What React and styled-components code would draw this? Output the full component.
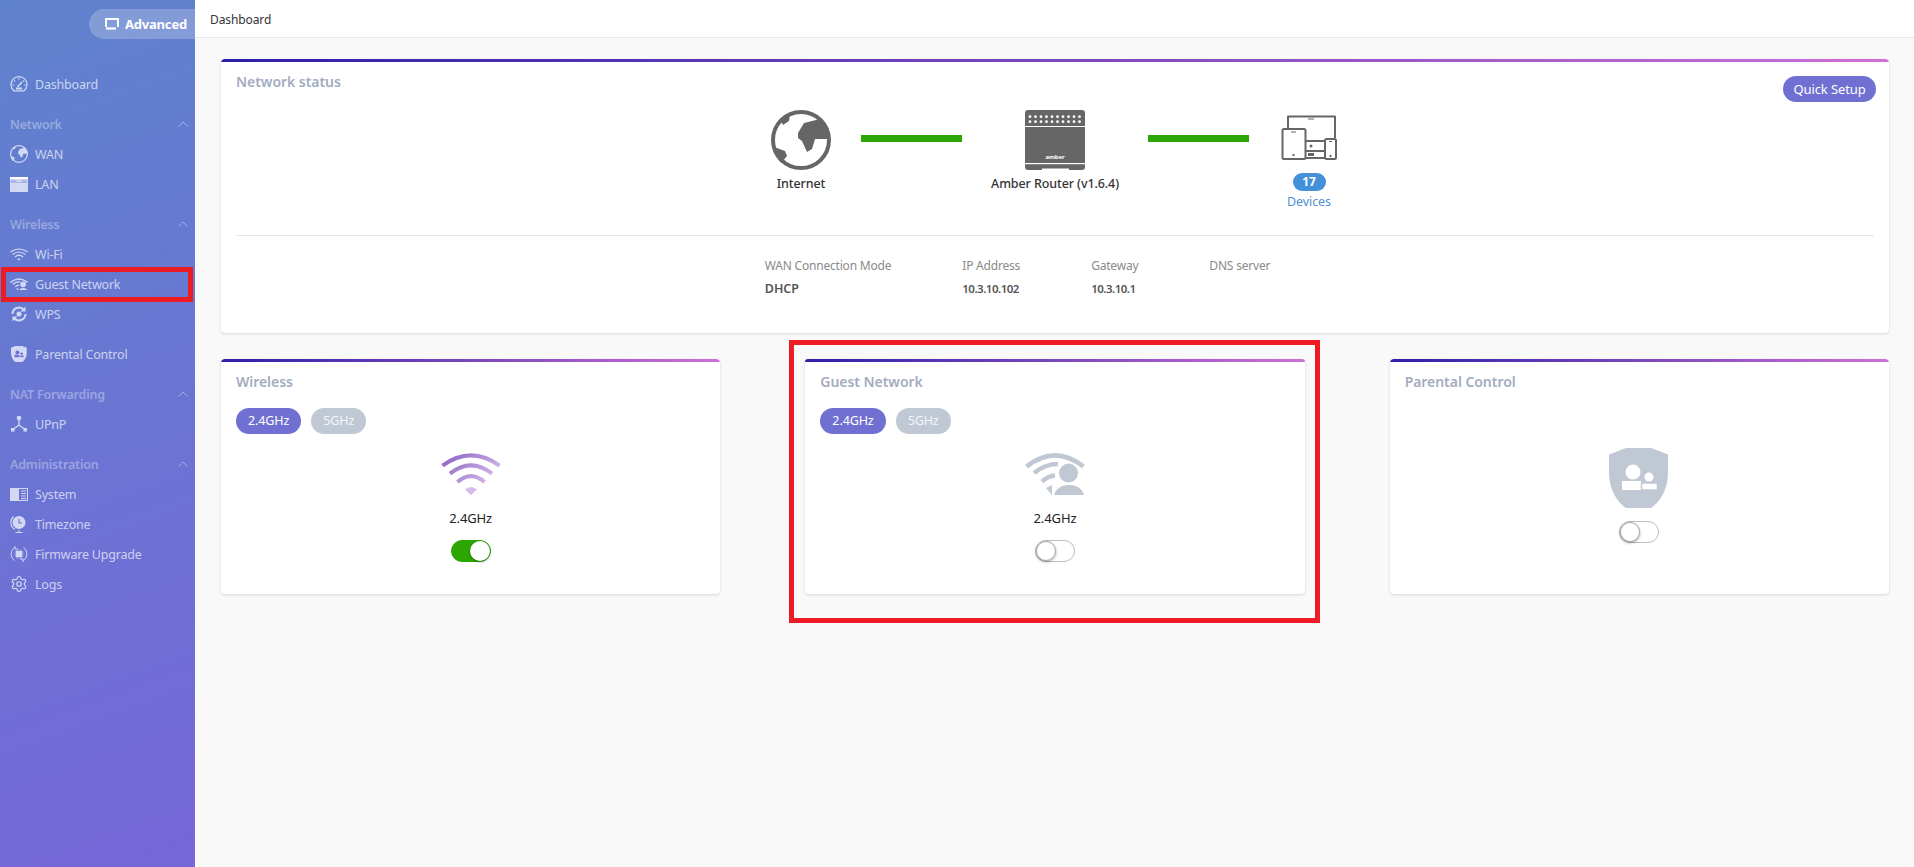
import styled, { createGlobalStyle } from 'styled-components';
import { Settings } from 'lucide-react';

const GlobalStyle = createGlobalStyle`
  html, body {
    margin: 0;
    padding: 0;
    height: 100%;
    overflow: hidden;
    background: #f9f9f9;
    font-family: "Noto Sans", "Open Sans", Arial, sans-serif;
  }
  #root { height: 100%; }
`;

const Page = styled.div`
  display: flex;
  width: 1914px;
  height: 867px;
`;

/* ---------- sidebar ---------- */
const Sidebar = styled.aside`
  width: 195px;
  flex: none;
  box-sizing: border-box;
  padding-top: 9px;
  background: linear-gradient(160deg, #5f82cd 0%, #6a75d3 50%, #7766d8 100%);
`;
const ModePill = styled.div`
  display: flex;
  align-items: center;
  gap: 6px;
  margin-left: 89px;
  height: 30px;
  padding-left: 16px;
  border-radius: 15px 0 0 15px;
  background: rgba(255, 255, 255, 0.22);
  color: #fff;
  font-size: 13px;
  font-weight: 700;
  letter-spacing: -0.2px;
`;
const Nav = styled.nav`
  margin-top: 30px;
`;
const NavGroup = styled.div`
  margin-bottom: 10px;
`;
const GroupHead = styled.div`
  display: flex;
  align-items: center;
  justify-content: space-between;
  height: 30px;
  padding: 0 7px 0 10px;
  color: rgba(255, 255, 255, 0.35);
  font-size: 12.5px;
  font-weight: 600;
  letter-spacing: -0.2px;
`;
const NavItem = styled.div`
  position: relative;
  display: flex;
  align-items: center;
  height: 30px;
  padding-left: 10px;
  color: rgba(255, 255, 255, 0.68);
  font-size: 12.5px;
  letter-spacing: -0.2px;

  ${(p) => p.$marked && `
    &::after {
      content: '';
      position: absolute;
      top: -2px;
      bottom: -3px;
      left: 1px;
      right: 2px;
      border: 5px solid #ed1c24;
    }
  `}
`;
const NavIcon = styled.span`
  display: flex;
  align-items: center;
  justify-content: center;
  width: 18px;
  height: 18px;
  margin-right: 7px;
  color: #d3d9f5;
`;

/* ---------- main ---------- */
const Main = styled.main`
  flex: 1;
  min-width: 0;
`;
const TopBar = styled.header`
  height: 38px;
  box-sizing: border-box;
  padding-left: 15px;
  background: #fff;
  border-bottom: 1px solid #e8e8e8;
  color: #333;
  font-size: 12px;
  line-height: 39px;
  letter-spacing: -0.1px;
`;
const Content = styled.div`
  padding: 21px 25px 0 26px;
`;
const Card = styled.section`
  position: relative;
  border-radius: 4px;
  background: #fff;
  box-shadow: 0 1px 3px rgba(0, 0, 0, 0.14);
  overflow: ${(p) => (p.$marked ? 'visible' : 'hidden')};

  &::before {
    content: '';
    display: block;
    height: 3px;
    border-radius: 4px 4px 0 0;
    background: linear-gradient(90deg, #2e1fa8 0%, #8a4fc0 60%, #cf6fd8 100%);
  }
  ${(p) => p.$marked && `
    &::after {
      content: '';
      position: absolute;
      top: -19px;
      bottom: -29px;
      left: -16px;
      right: -15px;
      border: 5px solid #ed1c24;
    }
  `}
`;
const CardTitle = styled.h2`
  margin: 0;
  padding: 7px 15px 0;
  height: 24px;
  color: #a3acc0;
  font-size: 14px;
  font-weight: 600;
  line-height: 26px;
  letter-spacing: -0.05px;
`;
const StatusCard = styled(Card)`
  height: 274px;
`;
const QuickSetup = styled.button`
  position: absolute;
  top: 17px;
  right: 13px;
  width: 93px;
  height: 26px;
  padding: 0;
  border: 0;
  border-radius: 13px;
  background: #7070d2;
  color: #fff;
  font: 400 13px "Noto Sans", sans-serif;
  letter-spacing: -0.1px;
`;
const Topology = styled.div`
  display: flex;
  justify-content: center;
  height: 126px;
  margin: 16px 15px 0;
  border-bottom: 1px solid #e6e6e6;
`;
const TopoNode = styled.div`
  display: flex;
  flex-direction: column;
  align-items: center;
  width: ${(p) => p.$w}px;
  color: #333;
  font-size: 12.5px;
  font-weight: 500;
  letter-spacing: -0.1px;
`;
const TopoIcon = styled.div`
  display: flex;
  align-items: flex-end;
  height: ${(p) => (p.$lift ? 51 : 61)}px;
  margin-bottom: ${(p) => (p.$lift ? 14 : 5)}px;
`;
const Link = styled.div`
  width: 101px;
  height: 7px;
  margin: 26px ${(p) => p.$right}px 0 ${(p) => p.$left}px;
  background: #2ca600;
`;
const CountBadge = styled.span`
  width: 33px;
  height: 18px;
  margin-top: -1px;
  border-radius: 9px;
  background: #4490d9;
  color: #fff;
  font-size: 12px;
  font-weight: 700;
  line-height: 18px;
  text-align: center;
`;
const DevicesLabel = styled.span`
  margin-top: 2px;
  color: #4f8fd6;
  font-size: 12.5px;
  font-weight: 400;
`;
const InfoRow = styled.div`
  display: flex;
  justify-content: center;
  padding: 21px 4px 0 0;
`;
const InfoCol = styled.div`
  padding-right: 71px;
`;
const InfoLabel = styled.div`
  height: 23px;
  color: #8a8a8a;
  font-size: 12px;
  line-height: 18px;
  letter-spacing: -0.2px;
`;
const InfoValue = styled.div`
  color: #555;
  font-size: ${(p) => (p.$numeric ? 11.5 : 12.5)}px;
  font-weight: 600;
  line-height: 18px;
  letter-spacing: ${(p) => (p.$numeric ? -0.5 : 0)}px;
`;
const CardRow = styled.div`
  display: grid;
  grid-template-columns: repeat(3, 1fr);
  gap: 85px;
  margin-top: 26px;
`;
const FeatureCard = styled(Card)`
  height: 235px;
`;
const BandTabs = styled.div`
  display: flex;
  gap: 10px;
  height: 26px;
  margin: 15px 15px 0;
`;
const BandTab = styled.span`
  padding: 0 12px;
  border-radius: 13px;
  background: ${(p) => (p.$active ? '#7070d2' : '#c0c8d4')};
  color: ${(p) => (p.$active ? '#fff' : '#f4f5f8')};
  font-size: 12.5px;
  letter-spacing: -0.1px;
  line-height: 26px;
`;
const FeatureBody = styled.div`
  display: flex;
  flex-direction: column;
  align-items: center;
  margin-top: ${(p) => p.$top}px;
`;
const BandLabel = styled.div`
  margin-top: 13px;
  color: #222;
  font-size: 13px;
  line-height: 20px;
  letter-spacing: -0.1px;
`;
const Toggle = styled.span`
  position: relative;
  display: block;
  box-sizing: border-box;
  width: 40px;
  height: 22px;
  margin-top: ${(p) => p.$top}px;
  border-radius: 11px;
  border: 1px solid ${(p) => (p.$on ? '#2ca600' : '#bdbdbd')};
  background: ${(p) => (p.$on ? '#2ca600' : '#fff')};

  &::after {
    content: '';
    position: absolute;
    top: 0;
    ${(p) => (p.$on ? 'right: 0;' : 'left: 0;')}
    box-sizing: border-box;
    width: 20px;
    height: 20px;
    border-radius: 50%;
    background: #fff;
    ${(p) => !p.$on && 'border: 1px solid #aaa;'}
    box-shadow: 0 1px 3px rgba(0, 0, 0, 0.35);
  }
`;

/* ---------- drawings ---------- */
const GlobeIcon = ({ size = 60, color = '#666' }) => (
  <svg width={size} height={size} viewBox="0 0 60 60" fill={color}>
    <circle cx="30" cy="30" r="28" fill="none" stroke={color} strokeWidth="4" />
    <path d="M27 23 33 13 49 9 57 20 58 29 44 29 41 39 36 42 31 31 27 28Z" />
    <path d="M9 9 19 4 18 11 12 15Z" />
    <path d="M3 37 14 41 16 46 10 53 5 46Z" />
  </svg>
);

const RouterIcon = () => {
  const dots = Array.from({ length: 10 }, (_, i) => 5 + i * 5.5);
  return (
    <svg width="60" height="60" viewBox="0 0 60 60">
      <path d="M3 0H57A3 3 0 0 1 60 3V57A3 3 0 0 1 57 60H44V58.5H17V60H3A3 3 0 0 1 0 57V3A3 3 0 0 1 3 0Z" fill="#666" />
      {dots.map((x) => (
        <g key={x} fill="#fff">
          <circle cx={x} cy="6.7" r="1.4" />
          <circle cx={x} cy="11.7" r="1.4" />
        </g>
      ))}
      <rect y="16" width="60" height="1" fill="#fff" />
      <rect y="53" width="60" height="1.2" fill="#fff" />
      <text x="30" y="49" fill="#fff" fontSize="6" fontWeight="700" textAnchor="middle" fontFamily="Noto Sans, sans-serif">amber</text>
    </svg>
  );
};

const DevicesIcon = () => (
  <svg width="57" height="45" viewBox="0 0 57 45" fill="none" stroke="#666" strokeWidth="2" strokeLinejoin="round">
    <path d="M7 13V1.500H54V23" />
    <path d="M27 4H33" strokeWidth="1" />
    <rect x="1.500" y="14" width="23" height="30" rx="1.500" />
    <path d="M10 17H15" strokeWidth="1" />
    <rect x="44" y="24" width="11" height="20" rx="1.500" />
    <path d="M48 26.500H51" strokeWidth="1" />
    <path d="M25 26H44M25 36H44M25 43H44" />
    <rect x="11.500" y="39" width="2" height="2" fill="#666" stroke="none" />
    <rect x="48.500" y="40" width="2" height="2" fill="#666" stroke="none" />
    <circle cx="30" cy="31" r="1.500" fill="#666" stroke="none" />
    <path d="M27 39.500H33" strokeWidth="3" />
  </svg>
);

const WifiArcs = ({ width = 60, color }) => (
  <svg width={width} height={width * 0.72} viewBox="0 0 60 43">
    <defs>
      <linearGradient id="wifiFade" gradientUnits="userSpaceOnUse" x1="5" y1="0" x2="45" y2="43">
        <stop offset="0" stopColor="#8a62c2" />
        <stop offset="1" stopColor="#dcc3ee" />
      </linearGradient>
    </defs>
    <g fill="none" stroke={color || 'url(#wifiFade)'} strokeWidth="4">
      <path d="M1.500 13.500Q30 -7 58.500 13.500" />
      <path d="M9 21.500Q30 5 51 21.500" />
      <path d="M16.500 30Q30 18 43.500 30" />
    </g>
    <path d="M24 37.500Q30 32.500 36 37.500L30 43Z" fill={color || '#d8bcea'} />
  </svg>
);

const GuestArcs = ({ width = 60, color = '#c0c8d4' }) => (
  <svg width={width} height={width * 0.72} viewBox="0 0 60 43">
    <g fill="none" stroke={color} strokeWidth="4.500">
      <path d="M1.500 14.500Q30 -8 58.500 14.500" />
      <path d="M9 21Q20 12 33 12" />
      <path d="M17 29.500Q23 24 30 23.500" />
    </g>
    <path d="M21 36 27 33 27 43Z" fill={color} />
    <circle cx="43.500" cy="21" r="9.500" fill={color} />
    <path d="M29 43Q32 33 44 33Q56 33 59 43Z" fill={color} />
  </svg>
);

const ShieldIcon = ({ size = 60, color = '#c0c8d4', cut = '#fff' }) => (
  <svg width={size} height={size} viewBox="0 0 60 60">
    <path d="M0 6.500 17 0H42L59 6.500V25C59 42 50 55 42 60H17C9 55 0 42 0 25Z" fill={color} />
    <circle cx="24" cy="24" r="7.500" fill={cut} />
    <rect x="13" y="33" width="19" height="9" fill={cut} />
    <circle cx="40" cy="29" r="4.500" fill={cut} />
    <rect x="32.500" y="35" width="16" height="7" fill={cut} stroke={color} strokeWidth="1.500" />
  </svg>
);

const Chevron = () => (
  <svg width="10" height="6" viewBox="0 0 10 6" fill="none" stroke="rgba(255,255,255,0.4)" strokeWidth="1">
    <path d="M.5 5.500 5 1 9.500 5.500" />
  </svg>
);

const MonitorIcon = () => (
  <svg width="14" height="12" viewBox="0 0 14 12" fill="none" stroke="#fff">
    <path d="M1 9V1H13V9" strokeWidth="2" />
    <path d="M1 10.500H11" strokeWidth="2.200" />
  </svg>
);

const DashIcon = () => (
  <svg width="18" height="18" viewBox="0 0 18 18" fill="none" stroke="currentColor" strokeWidth="1.200">
    <path d="M4 15.800A8 8 0 1 1 14 15.800Z" />
    <path d="M9 3V4.500M4 5.500 5 6.500M14 5.500 13 6.500M2.500 10H4M14 10H15.500" />
    <path d="M7.500 12 12 7" strokeWidth="1.500" />
    <rect x="6" y="12.500" width="6" height="2" fill="currentColor" stroke="none" />
  </svg>
);
const LanIcon = () => (
  <svg width="18" height="15" viewBox="0 0 18 15">
    <rect width="18" height="15" fill="#d3d9f5" />
    <rect width="18" height="2" fill="#fff" />
    <path d="M1 3H6.500V5H11.500V3H17V6H1Z" fill="#8a97dd" opacity="0.55" />
  </svg>
);
const WpsIcon = () => (
  <svg width="18" height="18" viewBox="0 0 18 18" fill="none" stroke="currentColor" strokeWidth="2">
    <path d="M2.500 9A6.500 6.500 0 0 1 14 5" />
    <path d="M15.500 9A6.500 6.500 0 0 1 4 13" />
    <path d="M15.500 1.500V6.500H10.500Z M2.500 16.500V11.500H7.500Z" fill="currentColor" stroke="none" />
    <circle cx="9" cy="9" r="2.500" fill="currentColor" stroke="none" />
  </svg>
);
const UpnpIcon = () => (
  <svg width="18" height="18" viewBox="0 0 18 18" fill="currentColor" stroke="currentColor">
    <circle cx="9" cy="3" r="2.300" stroke="none" />
    <path d="M9 4V10M9 10 3 14.500M9 10 15 14.500" fill="none" strokeWidth="1.300" />
    <rect x="1" y="13" width="3.500" height="3.500" stroke="none" />
    <rect x="13.500" y="13" width="3.500" height="3.500" stroke="none" />
  </svg>
);
const SystemIcon = () => (
  <svg width="18" height="13" viewBox="0 0 18 13">
    <rect x=".5" y=".5" width="17" height="12" fill="none" stroke="#d3d9f5" />
    <rect width="9" height="13" fill="#d3d9f5" />
    <path d="M11 3H16M11 5.500H16M11 8H16M11 10.500H16" stroke="#d3d9f5" />
  </svg>
);
const ClockGlobeIcon = () => (
  <svg width="18" height="18" viewBox="0 0 18 18">
    <circle cx="9" cy="7.500" r="6.500" fill="#d3d9f5" />
    <path d="M9 4V8H12" fill="none" stroke="#6a75d3" strokeWidth="1.100" />
    <path d="M3.500 1.500A8 8 0 0 0 5 14.500M9 15V17M5.500 17.500H12.500" fill="none" stroke="#d3d9f5" strokeWidth="1.100" />
  </svg>
);
const FirmwareIcon = () => (
  <svg width="18" height="18" viewBox="0 0 18 18" fill="none" stroke="currentColor" strokeWidth="1">
    <path d="M5 2.200A8 8 0 0 0 4.500 15.500M13 15.800A8 8 0 0 0 13.500 2.500" />
    <path d="M5 1V4H8M13 17V14H10" />
    <rect x="6" y="6" width="6" height="6" fill="currentColor" stroke="none" />
    <path d="M7 4.500V13.500M9 4.500V13.500M11 4.500V13.500M4.500 7H13.500M4.500 9H13.500M4.500 11H13.500" strokeWidth=".7" />
  </svg>
);

const navGroups = [
  { items: [{ label: 'Dashboard', icon: <DashIcon /> }] },
  {
    title: 'Network',
    items: [
      { label: 'WAN', icon: <GlobeIcon size={18} color="#d3d9f5" /> },
      { label: 'LAN', icon: <LanIcon /> },
    ],
  },
  {
    title: 'Wireless',
    items: [
      { label: 'Wi-Fi', icon: <WifiArcs width={18} color="#d3d9f5" /> },
      { label: 'Guest Network', icon: <GuestArcs width={18} color="#d3d9f5" />, marked: true },
      { label: 'WPS', icon: <WpsIcon /> },
    ],
  },
  { items: [{ label: 'Parental Control', icon: <ShieldIcon size={16} color="#d3d9f5" cut="#6f70d4" /> }] },
  { title: 'NAT Forwarding', items: [{ label: 'UPnP', icon: <UpnpIcon /> }] },
  {
    title: 'Administration',
    items: [
      { label: 'System', icon: <SystemIcon /> },
      { label: 'Timezone', icon: <ClockGlobeIcon /> },
      { label: 'Firmware Upgrade', icon: <FirmwareIcon /> },
      { label: 'Logs', icon: <Settings size={18} strokeWidth={1.6} /> },
    ],
  },
];

const infoCols = [
  { label: 'WAN Connection Mode', value: 'DHCP' },
  { label: 'IP Address', value: '10.3.10.102', numeric: true },
  { label: 'Gateway', value: '10.3.10.1', numeric: true },
  { label: 'DNS server', value: '' },
];

function BandSwitcher() {
  return (
    <BandTabs>
      <BandTab $active>2.4GHz</BandTab>
      <BandTab>5GHz</BandTab>
    </BandTabs>
  );
}

export default function App() {
  return (
    <Page>
      <GlobalStyle />
      <Sidebar>
        <ModePill>
          <MonitorIcon />
          Advanced
        </ModePill>
        <Nav>
          {navGroups.map((group, i) => (
            <NavGroup key={i}>
              {group.title && (
                <GroupHead>
                  {group.title}
                  <Chevron />
                </GroupHead>
              )}
              {group.items.map((item) => (
                <NavItem key={item.label} $marked={item.marked}>
                  <NavIcon>{item.icon}</NavIcon>
                  {item.label}
                </NavItem>
              ))}
            </NavGroup>
          ))}
        </Nav>
      </Sidebar>
      <Main>
        <TopBar>Dashboard</TopBar>
        <Content>
          <StatusCard>
            <CardTitle>Network status</CardTitle>
            <QuickSetup>Quick Setup</QuickSetup>
            <Topology>
              <TopoNode $w={100}>
                <TopoIcon><GlobeIcon /></TopoIcon>
                Internet
              </TopoNode>
              <Link $left={10} $right={18} />
              <TopoNode $w={150}>
                <TopoIcon><RouterIcon /></TopoIcon>
                Amber Router (v1.6.4)
              </TopoNode>
              <Link $left={18} $right={10} />
              <TopoNode $w={100}>
                <TopoIcon $lift><DevicesIcon /></TopoIcon>
                <CountBadge>17</CountBadge>
                <DevicesLabel>Devices</DevicesLabel>
              </TopoNode>
            </Topology>
            <InfoRow>
              {infoCols.map((col) => (
                <InfoCol key={col.label}>
                  <InfoLabel>{col.label}</InfoLabel>
                  <InfoValue $numeric={col.numeric}>{col.value}</InfoValue>
                </InfoCol>
              ))}
            </InfoRow>
          </StatusCard>
          <CardRow>
            <FeatureCard>
              <CardTitle>Wireless</CardTitle>
              <BandSwitcher />
              <FeatureBody $top={18}>
                <WifiArcs />
                <BandLabel>2.4GHz</BandLabel>
                <Toggle $on $top={12} />
              </FeatureBody>
            </FeatureCard>
            <FeatureCard $marked>
              <CardTitle>Guest Network</CardTitle>
              <BandSwitcher />
              <FeatureBody $top={18}>
                <GuestArcs />
                <BandLabel>2.4GHz</BandLabel>
                <Toggle $top={12} />
              </FeatureBody>
            </FeatureCard>
            <FeatureCard>
              <CardTitle>Parental Control</CardTitle>
              <FeatureBody $top={55}>
                <ShieldIcon />
                <Toggle $top={13} />
              </FeatureBody>
            </FeatureCard>
          </CardRow>
        </Content>
      </Main>
    </Page>
  );
}
